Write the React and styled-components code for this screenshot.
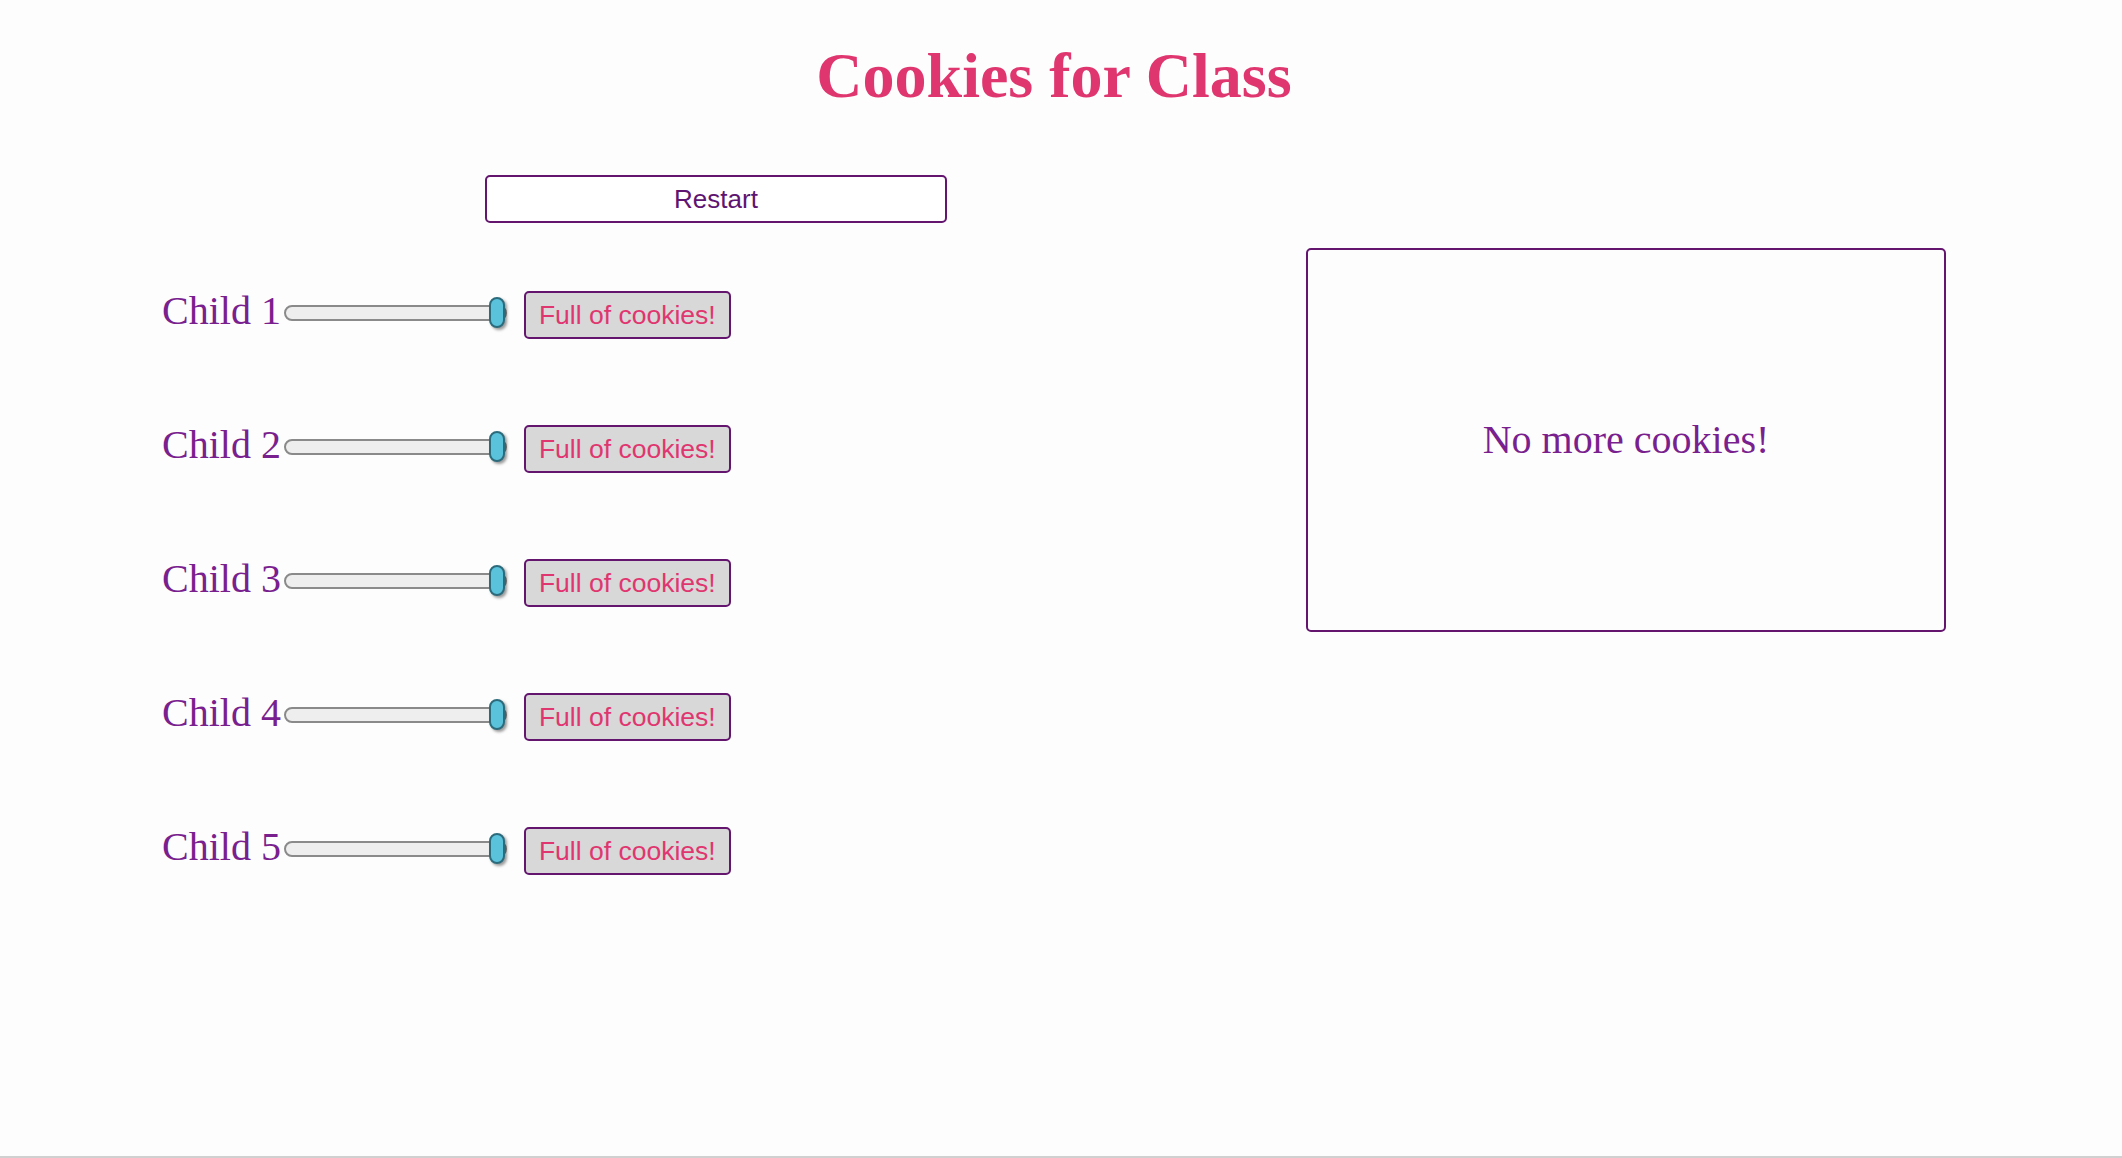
import React, { useState } from "react";
import styled, { createGlobalStyle } from "styled-components";

const GlobalStyle = createGlobalStyle`
  html, body {
    margin: 0;
    padding: 0;
    background: #fdfdfd;
  }
  * { box-sizing: border-box; }
`;

const Page = styled.div`
  min-height: 100vh;
  border-bottom: 2px solid #d0d0d0;
  background: #fdfdfd;
`;

const Title = styled.h1`
  margin: 0;
  padding: 40px 14px 0 0;
  text-align: center;
  font-family: "Liberation Serif", "Times New Roman", serif;
  font-weight: bold;
  font-size: 64px;
  line-height: 72px;
  color: #e0366f;
`;

const Main = styled.div`
  display: grid;
  grid-template-columns: 1144px 640px;
  padding-left: 162px;
`;

const LeftColumn = styled.div`
  display: flex;
  flex-direction: column;
  align-items: flex-start;
  padding-top: 63px;
`;

const RestartButton = styled.button`
  width: 462px;
  height: 48px;
  margin-left: 323px;
  margin-bottom: 68px;
  padding: 0;
  background: #ffffff;
  border: 2px solid #64166f;
  border-radius: 5px;
  font-family: "Liberation Sans", Arial, sans-serif;
  font-size: 26px;
  line-height: 44px;
  color: #5e1470;
  cursor: pointer;
`;

const Rows = styled.div`
  display: flex;
  flex-direction: column;
  gap: 86px;
`;

const Row = styled.div`
  display: flex;
  align-items: center;
  height: 48px;
`;

const Label = styled.span`
  font-family: "Liberation Serif", "Times New Roman", serif;
  font-size: 40px;
  line-height: 48px;
  color: #7a1f8e;
  margin-bottom: 9px;
  white-space: nowrap;
`;

const Slider = styled.input`
  -webkit-appearance: none;
  appearance: none;
  width: 223px;
  height: 31px;
  margin: 0 17px 5px 3px;
  padding: 0;
  background: transparent;

  &::-webkit-slider-runnable-track {
    height: 16px;
    background: #eeeeee;
    border: 2px solid #8a8a8a;
    border-radius: 8px;
  }

  &::-webkit-slider-thumb {
    -webkit-appearance: none;
    appearance: none;
    width: 16px;
    height: 31px;
    margin-top: -9.5px;
    background: #5bc2dc;
    border: 2px solid #2c6b7c;
    border-radius: 8px;
    box-shadow: 2px 2px 3px rgba(0, 0, 0, 0.4);
  }

  &::-moz-range-track {
    height: 12px;
    background: #eeeeee;
    border: 2px solid #8a8a8a;
    border-radius: 8px;
  }

  &::-moz-range-thumb {
    width: 12px;
    height: 27px;
    background: #5bc2dc;
    border: 2px solid #2c6b7c;
    border-radius: 8px;
  }

  &:focus { outline: none; }
`;

const CookieButton = styled.button`
  height: 48px;
  padding: 0 13px;
  background: #d8d8d8;
  border: 2px solid #64166f;
  border-radius: 5px;
  font-family: "Liberation Sans", Arial, sans-serif;
  font-size: 26.5px;
  line-height: 44px;
  color: #e0366f;
  white-space: nowrap;
  cursor: pointer;
`;

const RightColumn = styled.div`
  padding-top: 136px;
`;

const MessageBox = styled.div`
  width: 640px;
  height: 384px;
  border: 2px solid #64166f;
  border-radius: 5px;
  display: flex;
  align-items: center;
  justify-content: center;
  font-family: "Liberation Serif", "Times New Roman", serif;
  font-size: 40px;
  line-height: 48px;
  color: #7a1f8e;
`;

const children = [1, 2, 3, 4, 5];

export default function App() {
  const [values, setValues] = useState(children.map(() => 10));

  const update = (i, v) =>
    setValues((prev) => prev.map((x, j) => (j === i ? v : x)));

  return (
    <>
      <GlobalStyle />
      <Page>
        <Title>Cookies for Class</Title>
        <Main>
          <LeftColumn>
            <RestartButton onClick={() => setValues(children.map(() => 10))}>
              Restart
            </RestartButton>
            <Rows>
              {children.map((n, i) => (
                <Row key={n}>
                  <Label>Child {n}</Label>
                  <Slider
                    type="range"
                    min={0}
                    max={10}
                    value={values[i]}
                    onChange={(e) => update(i, Number(e.target.value))}
                  />
                  <CookieButton>Full of cookies!</CookieButton>
                </Row>
              ))}
            </Rows>
          </LeftColumn>
          <RightColumn>
            <MessageBox>No more cookies!</MessageBox>
          </RightColumn>
        </Main>
      </Page>
    </>
  );
}
